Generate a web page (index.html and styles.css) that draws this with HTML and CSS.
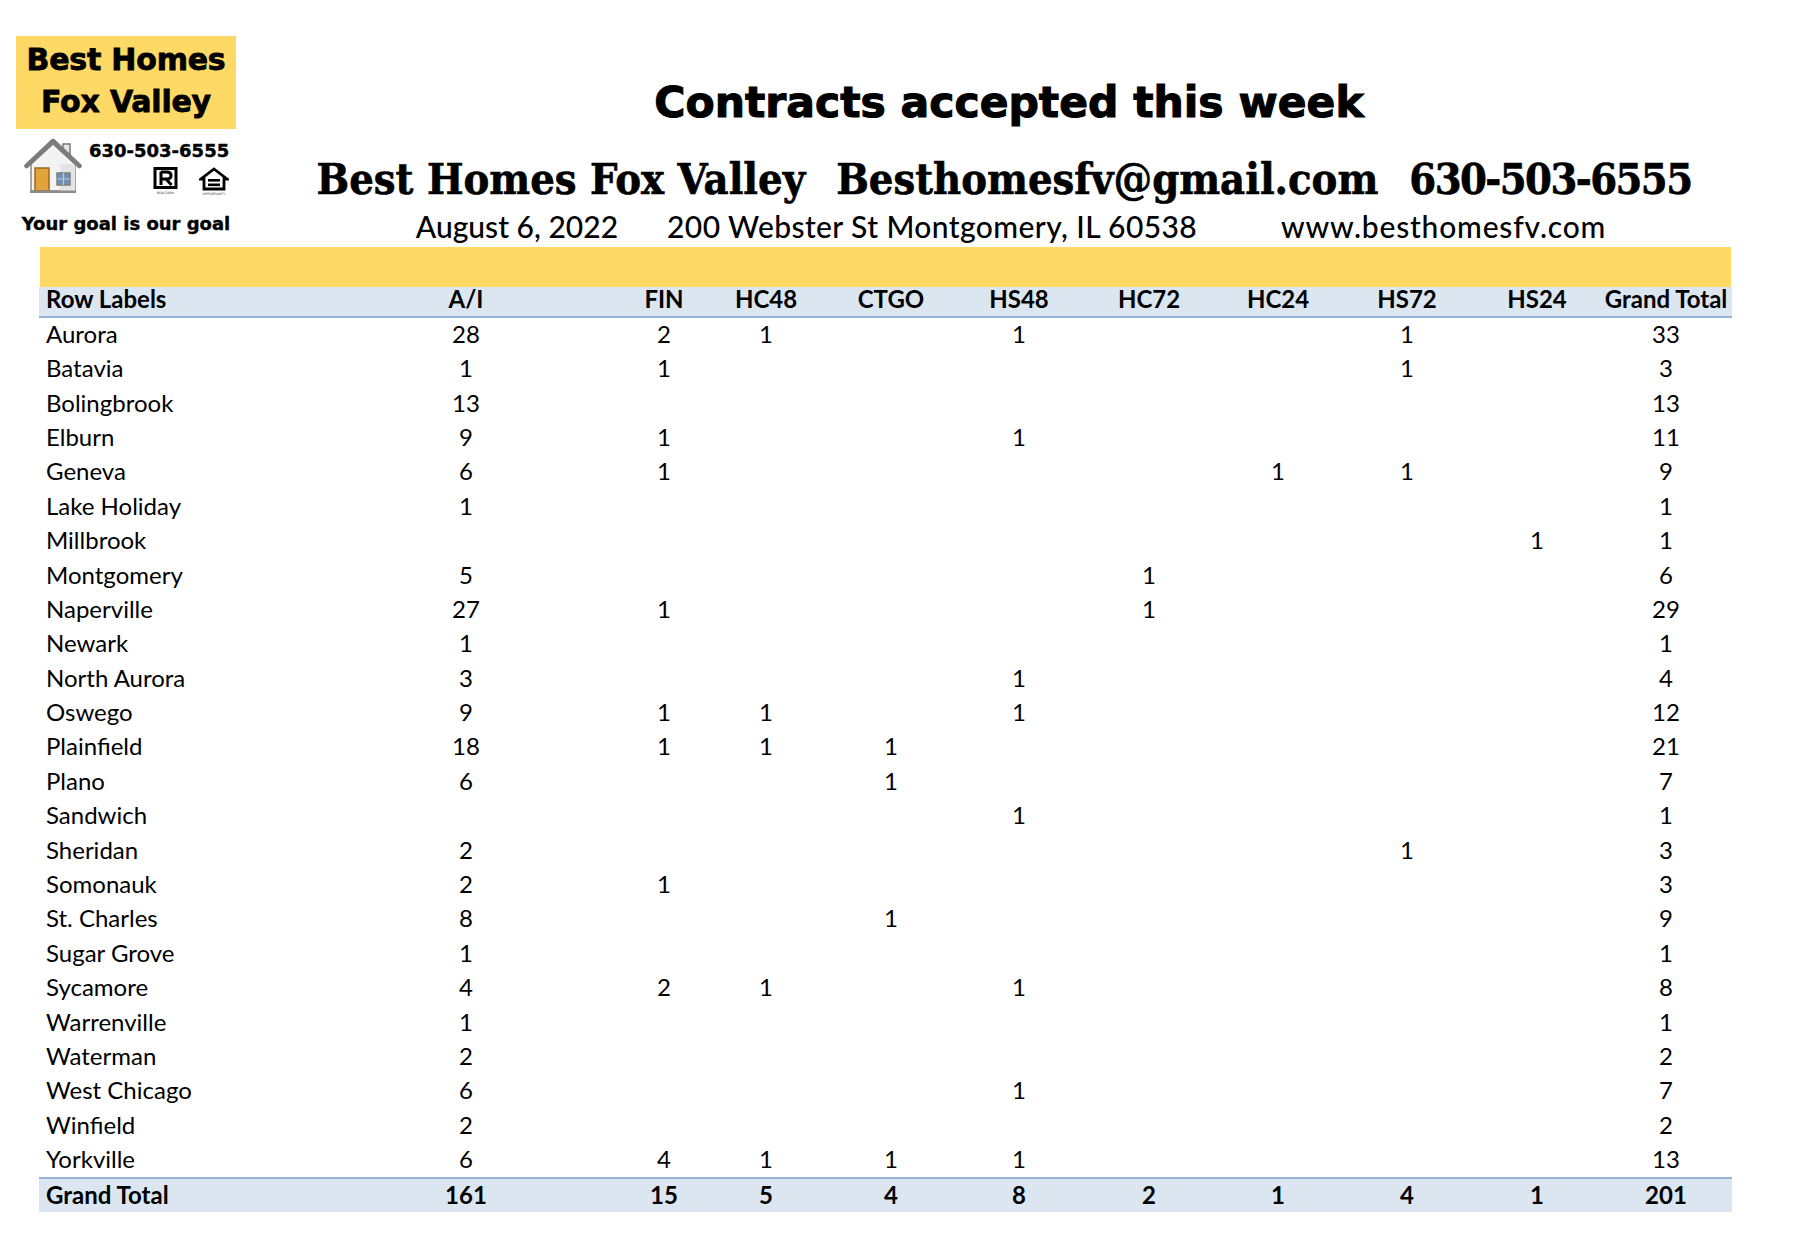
FILE: index.html
```html
<!DOCTYPE html>
<html lang="en">
<head>
<meta charset="utf-8">
<title>Contracts accepted this week</title>
<link rel="stylesheet" href="styles.css">
</head>
<body>
<div class="page">
  <header class="header">
    <div class="brand">
      <div class="brand-box">
        <div>Best Homes</div>
        <div>Fox Valley</div>
      </div>
      <div class="brand-mid">
        <svg class="house" width="58" height="57" viewBox="0 0 58 57">
          <rect x="39" y="7" width="7" height="13" fill="#e6e6e6" stroke="#7a7a7a" stroke-width="1.5"/>
          <path d="M7 27 V54 H51 V27 L29 7 Z" fill="#f3f3f3" stroke="#8c8c8c" stroke-width="1.5"/>
          <path d="M36 27 V54 H51 V27 Z" fill="#e4e4e4"/>
          <path d="M2.5 29 L29 4 L55.5 29" fill="none" stroke="#7b7b7b" stroke-width="4.5" stroke-linejoin="round" stroke-linecap="round"/>
          <rect x="11" y="31" width="14" height="23" fill="#e3a33b" stroke="#9a6a1c" stroke-width="1.5"/>
          <rect x="33" y="36" width="13" height="12" fill="#6f90b6" stroke="#7d7d7d" stroke-width="1.5"/>
          <path d="M39.5 36 V48 M33 42 H46" stroke="#c9c9c9" stroke-width="1.2"/>
          <rect x="6" y="53.5" width="46" height="2.5" fill="#8c8c8c"/>
        </svg>
        <div class="brand-contact">
          <div class="brand-phone">630-503-6555</div>
          <div class="brand-icons">
            <svg width="26" height="29" viewBox="0 0 26 29">
              <rect x="2" y="1.5" width="21" height="19" fill="#fff" stroke="#000" stroke-width="3"/>
              <path d="M8 4.5 V18 M8 5 H13.5 Q18 5 18 8.5 Q18 12 13.5 12 H8 M13 12 L18.5 18" fill="none" stroke="#000" stroke-width="3"/>
              <text x="12.5" y="27" class="micro" text-anchor="middle">REALTOR®</text>
            </svg>
            <svg width="30" height="29" viewBox="0 0 30 29">
              <path d="M15 2 L28 12 H25 V22 H5 V12 H2 Z" fill="#fff" stroke="#000" stroke-width="2.8" stroke-linejoin="miter"/>
              <rect x="9" y="12" width="12" height="2.6" fill="#000"/>
              <rect x="9" y="16.5" width="12" height="2.6" fill="#000"/>
              <text x="15" y="27.5" class="micro" text-anchor="middle">OPPORTUNITY</text>
            </svg>
          </div>
        </div>
      </div>
      <div class="tagline">Your goal is our goal</div>
    </div>
    <div class="heading">
      <h1 class="title">Contracts accepted this week</h1>
      <div class="contact-line">
        <span>Best Homes Fox Valley</span>
        <span>Besthomesfv@gmail.com</span>
        <span class="phone">630-503-6555</span>
      </div>
      <div class="info-line">
        <span>August 6, 2022</span>
        <span class="addr">200 Webster St Montgomery, IL 60538</span>
        <span class="web">www.besthomesfv.com</span>
      </div>
    </div>
  </header>

  <section class="report">
    <div class="band"></div>
    <table class="pivot">
      <colgroup>
        <col class="c-label"><col class="c-ai"><col class="c-fin"><col class="c-hc48"><col class="c-ctgo"><col class="c-hs48"><col class="c-hc72"><col class="c-hc24"><col class="c-hs72"><col class="c-hs24"><col class="c-gt">
      </colgroup>
      <thead>
        <tr><th class="lbl">Row Labels</th><th>A/I</th><th>FIN</th><th>HC48</th><th>CTGO</th><th>HS48</th><th>HC72</th><th>HC24</th><th>HS72</th><th>HS24</th><th>Grand Total</th></tr>
      </thead>
      <tbody>
        <tr><td class="lbl">Aurora</td><td>28</td><td>2</td><td>1</td><td></td><td>1</td><td></td><td></td><td>1</td><td></td><td>33</td></tr>
        <tr><td class="lbl">Batavia</td><td>1</td><td>1</td><td></td><td></td><td></td><td></td><td></td><td>1</td><td></td><td>3</td></tr>
        <tr><td class="lbl">Bolingbrook</td><td>13</td><td></td><td></td><td></td><td></td><td></td><td></td><td></td><td></td><td>13</td></tr>
        <tr><td class="lbl">Elburn</td><td>9</td><td>1</td><td></td><td></td><td>1</td><td></td><td></td><td></td><td></td><td>11</td></tr>
        <tr><td class="lbl">Geneva</td><td>6</td><td>1</td><td></td><td></td><td></td><td></td><td>1</td><td>1</td><td></td><td>9</td></tr>
        <tr><td class="lbl">Lake Holiday</td><td>1</td><td></td><td></td><td></td><td></td><td></td><td></td><td></td><td></td><td>1</td></tr>
        <tr><td class="lbl">Millbrook</td><td></td><td></td><td></td><td></td><td></td><td></td><td></td><td></td><td>1</td><td>1</td></tr>
        <tr><td class="lbl">Montgomery</td><td>5</td><td></td><td></td><td></td><td></td><td>1</td><td></td><td></td><td></td><td>6</td></tr>
        <tr><td class="lbl">Naperville</td><td>27</td><td>1</td><td></td><td></td><td></td><td>1</td><td></td><td></td><td></td><td>29</td></tr>
        <tr><td class="lbl">Newark</td><td>1</td><td></td><td></td><td></td><td></td><td></td><td></td><td></td><td></td><td>1</td></tr>
        <tr><td class="lbl">North Aurora</td><td>3</td><td></td><td></td><td></td><td>1</td><td></td><td></td><td></td><td></td><td>4</td></tr>
        <tr><td class="lbl">Oswego</td><td>9</td><td>1</td><td>1</td><td></td><td>1</td><td></td><td></td><td></td><td></td><td>12</td></tr>
        <tr><td class="lbl">Plainfield</td><td>18</td><td>1</td><td>1</td><td>1</td><td></td><td></td><td></td><td></td><td></td><td>21</td></tr>
        <tr><td class="lbl">Plano</td><td>6</td><td></td><td></td><td>1</td><td></td><td></td><td></td><td></td><td></td><td>7</td></tr>
        <tr><td class="lbl">Sandwich</td><td></td><td></td><td></td><td></td><td>1</td><td></td><td></td><td></td><td></td><td>1</td></tr>
        <tr><td class="lbl">Sheridan</td><td>2</td><td></td><td></td><td></td><td></td><td></td><td></td><td>1</td><td></td><td>3</td></tr>
        <tr><td class="lbl">Somonauk</td><td>2</td><td>1</td><td></td><td></td><td></td><td></td><td></td><td></td><td></td><td>3</td></tr>
        <tr><td class="lbl">St. Charles</td><td>8</td><td></td><td></td><td>1</td><td></td><td></td><td></td><td></td><td></td><td>9</td></tr>
        <tr><td class="lbl">Sugar Grove</td><td>1</td><td></td><td></td><td></td><td></td><td></td><td></td><td></td><td></td><td>1</td></tr>
        <tr><td class="lbl">Sycamore</td><td>4</td><td>2</td><td>1</td><td></td><td>1</td><td></td><td></td><td></td><td></td><td>8</td></tr>
        <tr><td class="lbl">Warrenville</td><td>1</td><td></td><td></td><td></td><td></td><td></td><td></td><td></td><td></td><td>1</td></tr>
        <tr><td class="lbl">Waterman</td><td>2</td><td></td><td></td><td></td><td></td><td></td><td></td><td></td><td></td><td>2</td></tr>
        <tr><td class="lbl">West Chicago</td><td>6</td><td></td><td></td><td></td><td>1</td><td></td><td></td><td></td><td></td><td>7</td></tr>
        <tr><td class="lbl">Winfield</td><td>2</td><td></td><td></td><td></td><td></td><td></td><td></td><td></td><td></td><td>2</td></tr>
        <tr><td class="lbl">Yorkville</td><td>6</td><td>4</td><td>1</td><td>1</td><td>1</td><td></td><td></td><td></td><td></td><td>13</td></tr>
      </tbody>
      <tfoot>
        <tr><td class="lbl">Grand Total</td><td>161</td><td>15</td><td>5</td><td>4</td><td>8</td><td>2</td><td>1</td><td>4</td><td>1</td><td>201</td></tr>
      </tfoot>
    </table>
  </section>
</div>
</body>
</html>
```

FILE: styles.css
```css
html, body {
  margin: 0;
  padding: 0;
  background: #ffffff;
}

body {
  font-family: Lato, "Liberation Sans", sans-serif;
  color: #000000;
}

.page {
  width: 1800px;
  height: 1260px;
  overflow: hidden;
}

/* ---------- header ---------- */
.header {
  display: flex;
  height: 247px;
}

.brand {
  width: 220px;
  margin-left: 16px;
  font-family: "DejaVu Sans", "Liberation Sans", sans-serif;
  font-weight: bold;
}

.brand-box {
  margin-top: 36px;
  height: 93px;
  box-sizing: border-box;
  padding-top: 3px;
  background: #ffd966;
  font-size: 30px;
  line-height: 42px;
  text-align: center;
  letter-spacing: -0.2px;
  -webkit-text-stroke: 0.8px #000;
}

.brand-mid {
  display: flex;
  height: 84px;
}

.house {
  margin-left: 8px;
  margin-top: 8px;
  flex: none;
}

.brand-contact {
  margin-left: 7px;
  display: flex;
  flex-direction: column;
}

.brand-phone {
  margin-top: 11px;
  font-size: 18px;
  line-height: 22px;
  white-space: nowrap;
  -webkit-text-stroke: 0.4px #000;
}

.brand-icons {
  margin-top: 5px;
  padding-left: 64px;
  display: flex;
  gap: 20px;
}

.micro {
  font-family: "DejaVu Sans", sans-serif;
  font-size: 3.2px;
  font-weight: normal;
  fill: #333;
}

.tagline {
  font-size: 18px;
  line-height: 22px;
  text-align: center;
  white-space: nowrap;
  -webkit-text-stroke: 0.4px #000;
}

.heading {
  flex: 1;
  display: flex;
  flex-direction: column;
  align-items: center;
  padding-right: 18px;
}

.title {
  margin: 78px 0 0 0;
  font-family: "DejaVu Sans", "Liberation Sans", sans-serif;
  font-weight: bold;
  font-size: 42.5px;
  line-height: 50px;
  white-space: nowrap;
  -webkit-text-stroke: 1.1px #000;
}

.contact-line {
  margin-top: 23px;
  display: flex;
  gap: 31px;
  font-family: "DejaVu Serif", "Liberation Serif", serif;
  font-weight: bold;
  font-stretch: condensed;
  font-size: 43px;
  line-height: 56px;
  white-space: nowrap;
  padding-right: 10px;
  -webkit-text-stroke: 0.6px #000;
}

.contact-line .phone {
  letter-spacing: -1.6px;
}

.info-line {
  margin-top: 1px;
  display: flex;
  font-size: 30px;
  font-weight: 500;
  line-height: 36px;
  white-space: nowrap;
  padding-left: 4px;
}

.info-line .addr {
  margin-left: 49px;
  letter-spacing: 0.4px;
}

.info-line .web {
  margin-left: 84px;
  letter-spacing: 0.8px;
}

/* ---------- pivot table ---------- */
.report {
  margin-left: 39px;
  width: 1693px;
}

.band {
  height: 40px;
  margin-left: 1px;
  width: 1691px;
  background: #ffd966;
}

.pivot {
  width: 1693px;
  border-collapse: collapse;
  table-layout: fixed;
  font-size: 24px;
}

.c-label { width: 271px; }
.c-ai { width: 312px; }
.c-fin { width: 84px; }
.c-hc48 { width: 120px; }
.c-ctgo { width: 130px; }
.c-hs48 { width: 126px; }
.c-hc72 { width: 134px; }
.c-hc24 { width: 124px; }
.c-hs72 { width: 134px; }
.c-hs24 { width: 126px; }
.c-gt { width: 132px; }

.pivot th,
.pivot td {
  padding: 0;
  text-align: center;
  white-space: nowrap;
}

.pivot th.lbl,
.pivot td.lbl {
  text-align: left;
  padding-left: 7px;
}

.pivot thead th {
  height: 29px;
  line-height: 24px;
  padding-bottom: 5px;
  box-sizing: border-box;
  font-weight: bold;
  background: #dce6f1;
  border-bottom: 2px solid #95b3d7;
}

.pivot tbody td {
  height: 34.4px;
  line-height: 32px;
  padding-bottom: 2px;
  box-sizing: border-box;
}

.pivot tfoot td {
  height: 33px;
  line-height: 31px;
  padding-bottom: 2px;
  box-sizing: border-box;
  font-weight: bold;
  background: #dce6f1;
  border-top: 2px solid #95b3d7;
}
```
